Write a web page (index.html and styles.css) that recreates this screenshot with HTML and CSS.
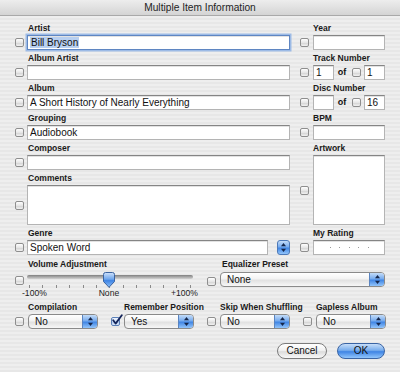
FILE: index.html
```html
<!DOCTYPE html>
<html>
<head>
<meta charset="utf-8">
<link rel="stylesheet" href="styles.css">
</head>
<body>
<div class="titlebar">Multiple Item Information</div>
<div class="content">
  <div class="top">
    <div class="col-left">
      <div class="label">Artist</div>
      <div class="row"><span class="cb"></span><div class="field wide focus"><span class="sel">Bill Bryson</span></div></div>
      <div class="label">Album Artist</div>
      <div class="row"><span class="cb"></span><div class="field wide"></div></div>
      <div class="label">Album</div>
      <div class="row"><span class="cb"></span><div class="field wide">A Short History of Nearly Everything</div></div>
      <div class="label">Grouping</div>
      <div class="row"><span class="cb"></span><div class="field wide">Audiobook</div></div>
      <div class="label">Composer</div>
      <div class="row"><span class="cb"></span><div class="field wide"></div></div>
      <div class="label">Comments</div>
      <div class="row tall"><span class="cb"></span><div class="field wide area"></div></div>
      <div class="label">Genre</div>
      <div class="row"><span class="cb"></span><div class="field genre">Spoken Word</div>
        <span class="stepper"><svg width="7" height="11" viewBox="0 0 7 11"><polygon points="3.5,1 6,4.2 1,4.2" fill="#15264a"/><polygon points="1,6.8 6,6.8 3.5,10" fill="#15264a"/></svg></span>
      </div>
    </div>
    <div class="col-right">
      <div class="label">Year</div>
      <div class="row"><span class="cb"></span><div class="field rfield"></div></div>
      <div class="label">Track Number</div>
      <div class="row"><span class="cb"></span><div class="field num">1</div><span class="of">of</span><span class="cb cb2"></span><div class="field num">1</div></div>
      <div class="label">Disc Number</div>
      <div class="row"><span class="cb"></span><div class="field num"></div><span class="of">of</span><span class="cb cb2"></span><div class="field num">16</div></div>
      <div class="label">BPM</div>
      <div class="row"><span class="cb"></span><div class="field rfield"></div></div>
      <div class="label">Artwork</div>
      <div class="row art"><span class="cb"></span><div class="field rfield artbox"></div></div>
      <div class="label">My Rating</div>
      <div class="row"><span class="cb"></span><div class="field rfield rating"><i></i><i></i><i></i><i></i><i></i></div></div>
    </div>
  </div>

  <div class="mid">
    <div class="vol">
      <div class="label">Volume Adjustment</div>
      <div class="slrow">
        <span class="cb"></span>
        <div class="slider">
          <div class="track"></div>
          <div class="ticks"><i></i><i></i><i></i><i></i><i></i><i></i><i></i><i></i><i></i><i></i><i></i><i></i><i></i></div>
          <div class="scale"><span>-100%</span><span>None</span><span>+100%</span></div>
          <svg class="thumb" width="12" height="16" viewBox="0 0 12 16">
            <defs><linearGradient id="tg" x1="0" y1="0" x2="0" y2="1"><stop offset="0" stop-color="#cfe2fb"/><stop offset="0.45" stop-color="#6fa6ec"/><stop offset="0.55" stop-color="#3f84e4"/><stop offset="1" stop-color="#8fc0f7"/></linearGradient></defs>
            <path d="M0.5,2.5 Q0.5,0.5 2.5,0.5 H9.5 Q11.5,0.5 11.5,2.5 V9.5 L6,15.3 L0.5,9.5 Z" fill="url(#tg)" stroke="#3a63a0" stroke-width="1"/>
          </svg>
        </div>
      </div>
    </div>
    <div class="eq">
      <div class="label">Equalizer Preset</div>
      <div class="eqrow"><span class="cb"></span>
        <div class="popup eqpop"><span class="ptext">None</span><span class="parrows"><svg width="7" height="11" viewBox="0 0 7 11"><polygon points="3.5,1 6,4.2 1,4.2" fill="#15264a"/><polygon points="1,6.8 6,6.8 3.5,10" fill="#15264a"/></svg></span></div>
      </div>
    </div>
  </div>

  <div class="bottom">
    <div class="grp">
      <div class="label">Compilation</div>
      <div class="grow"><span class="cb"></span><div class="popup"><span class="ptext">No</span><span class="parrows"><svg width="7" height="11" viewBox="0 0 7 11"><polygon points="3.5,1 6,4.2 1,4.2" fill="#15264a"/><polygon points="1,6.8 6,6.8 3.5,10" fill="#15264a"/></svg></span></div></div>
    </div>
    <div class="grp">
      <div class="label">Remember Position</div>
      <div class="grow"><span class="cb checked"><svg class="check" width="12" height="12" viewBox="0 0 12 12"><path d="M2.2,6.2 L4.6,9.6 L10.8,1.2" fill="none" stroke="#13245a" stroke-width="1.8" stroke-linecap="round" stroke-linejoin="round"/></svg></span><div class="popup"><span class="ptext">Yes</span><span class="parrows"><svg width="7" height="11" viewBox="0 0 7 11"><polygon points="3.5,1 6,4.2 1,4.2" fill="#15264a"/><polygon points="1,6.8 6,6.8 3.5,10" fill="#15264a"/></svg></span></div></div>
    </div>
    <div class="grp">
      <div class="label">Skip When Shuffling</div>
      <div class="grow"><span class="cb"></span><div class="popup"><span class="ptext">No</span><span class="parrows"><svg width="7" height="11" viewBox="0 0 7 11"><polygon points="3.5,1 6,4.2 1,4.2" fill="#15264a"/><polygon points="1,6.8 6,6.8 3.5,10" fill="#15264a"/></svg></span></div></div>
    </div>
    <div class="grp">
      <div class="label">Gapless Album</div>
      <div class="grow"><span class="cb"></span><div class="popup"><span class="ptext">No</span><span class="parrows"><svg width="7" height="11" viewBox="0 0 7 11"><polygon points="3.5,1 6,4.2 1,4.2" fill="#15264a"/><polygon points="1,6.8 6,6.8 3.5,10" fill="#15264a"/></svg></span></div></div>
    </div>
  </div>

  <div class="buttons">
    <div class="btn cancel">Cancel</div>
    <div class="btn ok">OK</div>
  </div>
</div>
</body>
</html>
```

FILE: styles.css
```css
* { box-sizing: border-box; }
html, body { margin: 0; padding: 0; }
body {
  width: 400px;
  height: 372px;
  overflow: hidden;
  font-family: "Liberation Sans", Arial, sans-serif;
  color: #111;
  background: repeating-linear-gradient(to bottom, #eeeeee 0, #eeeeee 2px, #e7e7e7 2px, #e7e7e7 4px);
}
.titlebar {
  height: 16px;
  border-bottom: 1px solid #a9a9a9;
  background: linear-gradient(#ededed, #d4d4d4);
  text-align: center;
  font-size: 10.2px;
  line-height: 15px;
  color: #1e1e1e;
}
.content { padding: 5px 15px 0 15px; }
.top { display: flex; gap: 10px; }
.col-left { width: 275px; flex: none; }
.col-right { width: 85px; flex: none; }
.label {
  font-weight: bold;
  font-size: 8.5px;
  line-height: 14px;
  height: 14px;
  padding-left: 13px;
  white-space: nowrap;
  color: #1a1a1a;
}
.row { display: flex; align-items: center; height: 15px; margin-bottom: 1px; }
.row.tall { height: 40px; }
.row.art { height: 70px; }
.cb {
  width: 9px;
  height: 9px;
  flex: none;
  border: 1px solid #8e8e8e;
  border-radius: 2px;
  background: linear-gradient(#fefefe, #e4e4e4 55%, #d6d6d6 60%, #f2f2f2);
}
.col-left .cb { margin-right: 3px; }
.col-right .cb { margin-right: 4px; }
.field {
  height: 15px;
  flex: none;
  background: #fff;
  border: 1px solid #b4b4b4;
  border-top-color: #858585;
  box-shadow: inset 0 1px 0 #e2e2e2;
  font-size: 10px;
  line-height: 13px;
  padding-left: 2px;
  white-space: nowrap;
  overflow: hidden;
}
.field.wide { width: 263px; }
.field.area { height: 40px; }
.field.genre { width: 241px; }
.field.rfield { width: 72px; }
.field.artbox { height: 70px; }
.field.num { width: 21px; }
.of {
  width: 16px;
  flex: none;
  text-align: center;
  font-weight: bold;
  font-size: 9px;
  line-height: 15px;
}
.col-right .cb.cb2 { margin-left: 2px; margin-right: 3px; }
.field.focus {
  border-color: #5f86c2;
  box-shadow: 0 0 0 1.5px #9dbbe6, inset 0 1px 0 #e2e2e2;
}
.sel { background: #b7cff0; padding: 0 1px; }
.stepper {
  width: 13px;
  height: 15px;
  margin-left: 9px;
  flex: none;
  border: 1px solid #4d79b8;
  border-radius: 3px;
  background: linear-gradient(#c4dcf8, #76abee 45%, #4186e4 55%, #93c5fb);
  display: flex;
  align-items: center;
  justify-content: center;
}
.rating { display: flex; align-items: center; justify-content: center; gap: 8.5px; padding-left: 0; }
.rating i { width: 1px; height: 1px; background: #9a9a9a; display: block; }

.mid { display: flex; gap: 9px; margin-top: 1px; height: 43px; }
.vol { width: 183px; flex: none; }
.slrow { display: flex; align-items: flex-start; }
.slrow .cb { margin-top: 5px; margin-right: 3px; }
.slider { position: relative; width: 166px; height: 29px; }
.track {
  margin-top: 4px;
  height: 4px;
  border-radius: 2px;
  background: linear-gradient(#7e7e7e, #a9a9a9 50%, #d2d2d2);
}
.ticks {
  margin-top: 6px;
  height: 3px;
  padding: 0 2px;
  display: flex;
  justify-content: space-between;
}
.ticks i { display: block; width: 1px; height: 3px; background: #8a8a8a; }
.scale {
  display: flex;
  justify-content: space-between;
  margin: 0 -5px;
  font-size: 8.6px;
  line-height: 10px;
  color: #222;
}
.thumb { position: absolute; left: 76px; top: 1px; }
.eq { width: 178px; flex: none; }
.eq .label { padding-left: 15px; }
.eqrow { display: flex; align-items: flex-start; }
.eqrow .cb { margin-top: 6px; margin-right: 4px; }
.popup {
  display: flex;
  height: 15px;
  width: 70px;
  flex: none;
  border: 1px solid #8a8a8a;
  border-radius: 4px;
  overflow: hidden;
  background: linear-gradient(#ffffff, #f3f3f3 45%, #e1e1e1 55%, #f7f7f7);
  font-size: 10px;
}
.eqpop { width: 165px; margin-top: 1px; }
.ptext { flex: 1; padding-left: 6px; line-height: 13px; }
.parrows {
  width: 15px;
  flex: none;
  border-left: 1px solid #5a84c0;
  background: linear-gradient(#c4dcf8, #76abee 45%, #4186e4 55%, #93c5fb);
  display: flex;
  align-items: center;
  justify-content: center;
}
.bottom { display: grid; grid-template-columns: 96px 96px 96px 84px; }
.grow { display: flex; align-items: center; height: 15px; }
.grow .cb { margin-right: 4px; }
.cb.checked {
  position: relative;
  border-color: #5a7fb8;
  background: linear-gradient(#eef4fd, #c7dbf5 55%, #b3cdf0 60%, #dbe8fa);
}
.check { position: absolute; left: -1px; top: -4px; }
.buttons { display: flex; justify-content: flex-end; gap: 10px; margin-top: 14px; }
.btn {
  height: 16px;
  border-radius: 8px;
  font-size: 10px;
  line-height: 14px;
  text-align: center;
  color: #111;
}
.cancel {
  width: 50px;
  border: 1px solid #7b7b7b;
  background: linear-gradient(#ffffff, #f2f2f2 45%, #dcdcdc 55%, #f8f8f8);
}
.ok {
  width: 48px;
  border: 1px solid #3a64a4;
  background: linear-gradient(#c7def9, #78aded 45%, #3f84e4 55%, #92c6fc);
}
```
